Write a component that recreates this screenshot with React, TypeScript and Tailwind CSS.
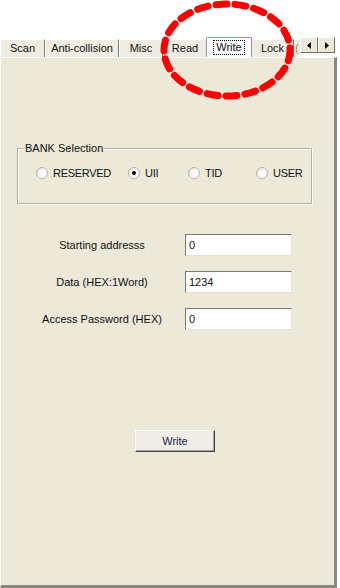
import React from "react";

const font = { fontFamily: '"Liberation Sans", Arial, sans-serif' };

function Tab({ label, w, selected }: { label: string; w: string; selected?: boolean }) {
  if (selected) {
    return (
      <div
        className={`${w} h-[20px] -mx-[1px] relative z-10 flex items-center justify-center bg-[#FCFCFE] border border-b-0 border-[#919B9C] border-t-[#E68B2C] rounded-t-[2px]`}
      >
        <span className="px-[2px] leading-[13px] border border-dotted border-black text-[11px] text-[#111]">{label}</span>
      </div>
    );
  }
  return (
    <div
      className={`${w} h-[18px] flex items-center justify-center bg-[#EFEDE2] border-l border-l-white border-t border-t-white border-r border-r-[#7D7B6E] text-[11px] text-[#111]`}
    >
      {label}
    </div>
  );
}

function Radio({ label, checked, w }: { label: string; checked?: boolean; w: string }) {
  return (
    <div className={`${w} flex items-center gap-[5px]`}>
      <div className="w-[12px] h-[12px] rounded-full border border-[#B5B3A8] bg-gradient-to-br from-[#DCDAD0] via-white to-white flex items-center justify-center">
        {checked && <div className="w-[4px] h-[4px] rounded-full bg-black" />}
      </div>
      <span className="text-[11px] text-[#111] tracking-[-0.3px]">{label}</span>
    </div>
  );
}

function Row({ label, value }: { label: string; value: string }) {
  return (
    <div className="flex items-center h-[22px]">
      <div className="w-[172px] pl-[30px] text-center text-[11px] text-[#111]">{label}</div>
      <div className="ml-[12px] w-[107px] h-[22px] bg-white border border-t-[#7A7A72] border-l-[#7A7A72] border-r-[#E4E2D6] border-b-[#E4E2D6] flex items-center pl-[3px] text-[11px] text-[#111]">
        {value}
      </div>
    </div>
  );
}

export default function App() {
  return (
    <div className="w-[340px] h-[588px] bg-white relative overflow-hidden flex flex-col" style={font}>
      <div className="h-[37px] shrink-0" />
      {/* tab strip */}
      <div className="h-[20px] shrink-0 flex items-end pr-[3px] relative">
        <Tab label="Scan" w="w-[45px]" />
        <Tab label="Anti-collision" w="w-[74px]" />
        <Tab label="Misc" w="w-[44px]" />
        <Tab label="Read" w="w-[44px]" />
        <Tab label="Write" w="w-[46px]" selected />
        <Tab label="Lock" w="w-[43px]" />
        <div className="w-[6px] h-[18px] bg-[#EFEDE2] border-t border-t-white text-[11px] overflow-hidden text-[#888] pl-[1px]">(</div>
        <div className="self-start flex">
          <div className="w-[18px] h-[16px] bg-[#ECE9D8] border border-t-white border-l-white border-r-[#716F64] border-b-[#716F64] flex items-center justify-center">
            <svg width="4" height="7" viewBox="0 0 4 7"><path d="M4 0 L0 3.5 L4 7 Z" fill="#000" /></svg>
          </div>
          <div className="w-[17px] h-[16px] bg-[#ECE9D8] border border-t-white border-l-white border-r-[#716F64] border-b-[#716F64] flex items-center justify-center">
            <svg width="4" height="7" viewBox="0 0 4 7"><path d="M0 0 L4 3.5 L0 7 Z" fill="#000" /></svg>
          </div>
        </div>
      </div>
      {/* panel */}
      <div className="flex-1 mr-[3px] bg-[#ECE9D8] border-l border-l-white border-t border-t-white border-r-[3px] border-r-[#8A887C] border-b-[3px] border-b-[#8A887C] flex flex-col">
        <div className="h-[90px] shrink-0" />
        {/* group box */}
        <div className="ml-[16px] w-[295px] h-[56px] relative border border-[#B4B2A6] shadow-[1px_1px_0_#FFFFFF,inset_1px_1px_0_#FFFFFF] flex items-center pb-[6px]">
          <span className="absolute -top-[8px] left-[6px] px-[1px] bg-[#ECE9D8] text-[11px] text-[#111] leading-[14px]">BANK Selection</span>
          <div className="flex items-center pl-[18px]">
            <Radio label="RESERVED" w="w-[92px]" />
            <Radio label="UII" checked w="w-[60px]" />
            <Radio label="TID" w="w-[68px]" />
            <Radio label="USER" w="w-[60px]" />
          </div>
        </div>
        <div className="h-[30px] shrink-0" />
        <div className="flex flex-col gap-[15px]">
          <Row label="Starting addresss" value="0" />
          <Row label="Data (HEX:1Word)" value="1234" />
          <Row label="Access Password (HEX)" value="0" />
        </div>
        <div className="h-[100px] shrink-0" />
        <div className="ml-[134px] w-[80px] h-[22px] bg-[#EFEDE5] border border-t-white border-l-white border-r-[#404040] border-b-[#404040] shadow-[inset_-1px_-1px_0_#ACA899] flex items-center justify-center text-[11px] text-[#1B1B50]">
          Write
        </div>
      </div>
      {/* red dashed highlight */}
      <svg className="absolute left-0 top-0 pointer-events-none" width="340" height="588">
        <ellipse cx="227" cy="50" rx="63" ry="46" fill="none" stroke="#FF0000" strokeWidth="7" strokeDasharray="11 8" strokeLinecap="round" />
      </svg>
    </div>
  );
}
